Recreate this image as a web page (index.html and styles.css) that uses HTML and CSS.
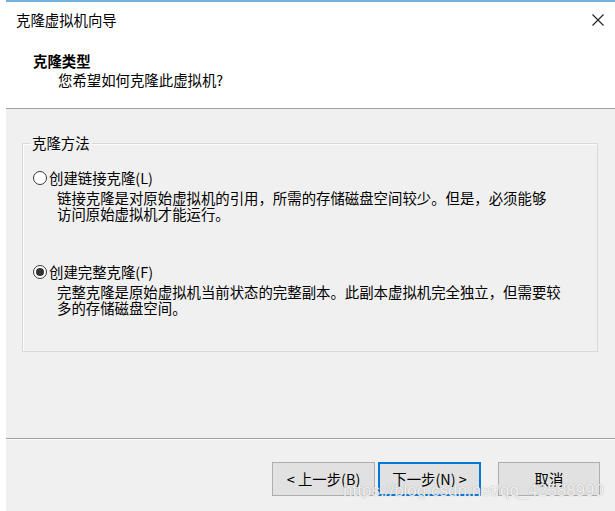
FILE: index.html
```html
<!DOCTYPE html>
<html lang="zh-CN">
<head>
<meta charset="utf-8">
<title>克隆虚拟机向导</title>
<link rel="stylesheet" href="styles.css">
</head>
<body>
<div class="window">
  <div class="titlebar">
    <span class="title">克隆虚拟机向导</span>
    <svg class="close" width="12" height="12" viewBox="0 0 12 12"><path d="M0.5 0.5 L11.5 11.5 M11.5 0.5 L0.5 11.5" stroke="#222" stroke-width="1.1" fill="none"/></svg>
  </div>
  <div class="header">
    <div class="heading">克隆类型</div>
    <div class="subheading">您希望如何克隆此虚拟机?</div>
  </div>
  <div class="body">
    <fieldset class="group">
      <legend class="legend">克隆方法</legend>
      <div class="option">
        <div class="radio-row"><span class="radio"></span><span class="label">创建链接克隆(L)</span></div>
        <div class="desc">链接克隆是对原始虚拟机的引用，所需的存储磁盘空间较少。但是，必须能够<br>访问原始虚拟机才能运行。</div>
      </div>
      <div class="option option-second">
        <div class="radio-row"><span class="radio checked"></span><span class="label">创建完整克隆(F)</span></div>
        <div class="desc">完整克隆是原始虚拟机当前状态的完整副本。此副本虚拟机完全独立，但需要较<br>多的存储磁盘空间。</div>
      </div>
    </fieldset>
  </div>
  <div class="footer">
    <button class="btn btn-back">&lt; 上一步(B)</button>
    <button class="btn btn-next">下一步(N) &gt;</button>
    <button class="btn btn-cancel">取消</button>
    <span class="watermark">https://blog.csdn.net/qq_42588990</span>
  </div>
</div>
</body>
</html>
```

FILE: styles.css
```css
html, body {
  margin: 0;
  padding: 0;
  background: #ffffff;
}

body {
  font-family: "Noto Sans CJK SC", "Microsoft YaHei", sans-serif;
  font-size: 14.4px;
  color: #000;
}

.window {
  margin-left: 6px;
  width: 609px;
  height: 511px;
  box-sizing: border-box;
  border-top: 2px solid #74b0de;
  display: flex;
  flex-direction: column;
  background: #f0f0f0;
}

.titlebar {
  height: 36px;
  background: #fff;
  display: flex;
  align-items: center;
  justify-content: space-between;
  padding-left: 10px;
  padding-right: 11px;
}

.title {
  line-height: 20px;
}

.close {
  display: block;
}

.header {
  background: #fff;
  padding: 13px 0 18px 27px;
  border-bottom: 1px solid #a0a0a0;
}

.heading {
  font-weight: bold;
  line-height: 20px;
}

.subheading {
  line-height: 20px;
  padding-left: 25px;
  margin-top: -1px;
}

.body {
  flex: 1;
  padding: 24px 17px 0 16px;
}

.group {
  margin: 0;
  padding: 15px 0 35px 10px;
  border: 1px solid #d9d9d9;
  box-shadow: inset 1px 1px 0 #fbfbfb;
  min-width: 0;
}

.legend {
  margin-left: -3px;
  padding: 0 2px;
  line-height: 20px;
}

.radio-row {
  display: flex;
  align-items: center;
  height: 20px;
}

.radio {
  width: 14px;
  height: 14px;
  box-sizing: border-box;
  border: 1px solid #3a3a3a;
  border-radius: 50%;
  background: #fff;
  margin-right: 2px;
  display: flex;
  align-items: center;
  justify-content: center;
}

.radio.checked::after {
  content: "";
  width: 8px;
  height: 8px;
  border-radius: 50%;
  background: #333;
}

.label {
  line-height: 20px;
}

.desc {
  margin-top: 2px;
  padding-left: 24px;
  line-height: 16px;
}

.option-second {
  margin-top: 40px;
}

.footer {
  position: relative;
  height: 73px;
  box-sizing: border-box;
  border-top: 1px solid #a0a0a0;
  box-shadow: inset 0 1px 0 #fafafa;
  padding: 23px 15px 0 0;
  display: flex;
  justify-content: flex-end;
  align-items: flex-start;
}

.btn {
  font-family: "Noto Sans CJK SC", "Microsoft YaHei", sans-serif;
  font-size: 14.4px;
  color: #000;
  height: 34px;
  box-sizing: border-box;
  background: #e1e1e1;
  border: 1px solid #adadad;
  padding: 0;
  line-height: 20px;
}

.btn-back {
  width: 103px;
}

.btn-next {
  width: 103px;
  margin-left: 3px;
  border: 2px solid #0078d7;
}

.btn-cancel {
  width: 102px;
  margin-left: 17px;
}

.watermark {
  position: absolute;
  right: 11px;
  top: 42px;
  font-family: "Liberation Sans", Arial, sans-serif;
  font-size: 17px;
  line-height: 20px;
  color: rgba(255, 255, 255, 0.85);
  text-shadow: 0 0 1px rgba(120, 120, 120, 0.7);
}
```
